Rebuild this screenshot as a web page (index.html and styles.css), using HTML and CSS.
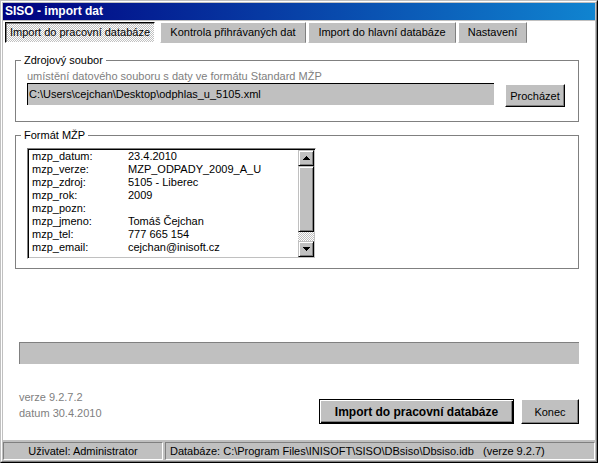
FILE: index.html
```html
<!DOCTYPE html>
<html lang="cs">
<head>
<meta charset="utf-8">
<title>SISO - import dat</title>
<link rel="stylesheet" href="styles.css">
</head>
<body>
<div class="window">
  <div class="frame">
    <div class="titlebar">SISO - import dat</div>
    <div class="body">
      <div class="tabs">
        <div class="tab tab-active t1">Import do pracovní databáze</div>
        <div class="tab t2">Kontrola přihrávaných dat</div>
        <div class="tab t3">Import do hlavní databáze</div>
        <div class="tab t4">Nastavení</div>
      </div>
      <div class="page">
        <fieldset class="group group-source">
          <legend>Zdrojový soubor</legend>
          <div class="hint">umístění datového souboru s daty ve formátu Standard MŽP</div>
          <div class="file-row">
            <div class="field">C:\Users\cejchan\Desktop\odphlas_u_5105.xml</div>
            <button class="btn btn-browse">Procházet</button>
          </div>
        </fieldset>
        <fieldset class="group group-format">
          <legend>Formát MŽP</legend>
          <div class="listbox">
            <div class="list-items">
              <div class="row"><span class="key">mzp_datum:</span><span>23.4.2010</span></div>
              <div class="row"><span class="key">mzp_verze:</span><span>MZP_ODPADY_2009_A_U</span></div>
              <div class="row"><span class="key">mzp_zdroj:</span><span>5105 - Liberec</span></div>
              <div class="row"><span class="key">mzp_rok:</span><span>2009</span></div>
              <div class="row"><span class="key">mzp_pozn:</span><span></span></div>
              <div class="row"><span class="key">mzp_jmeno:</span><span>Tomáš Čejchan</span></div>
              <div class="row"><span class="key">mzp_tel:</span><span>777 665 154</span></div>
              <div class="row"><span class="key">mzp_email:</span><span>cejchan@inisoft.cz</span></div>
            </div>
            <div class="scrollbar">
              <div class="sb-btn">
                <svg width="7" height="4" viewBox="0 0 7 4" shape-rendering="crispEdges"><rect x="3" y="0" width="1" height="1"/><rect x="2" y="1" width="3" height="1"/><rect x="1" y="2" width="5" height="1"/><rect x="0" y="3" width="7" height="1"/></svg>
              </div>
              <div class="sb-thumb"></div>
              <div class="sb-track"></div>
              <div class="sb-btn">
                <svg width="7" height="4" viewBox="0 0 7 4" shape-rendering="crispEdges"><rect x="0" y="0" width="7" height="1"/><rect x="1" y="1" width="5" height="1"/><rect x="2" y="2" width="3" height="1"/><rect x="3" y="3" width="1" height="1"/></svg>
              </div>
            </div>
          </div>
        </fieldset>
        <div class="progress"></div>
        <div class="footer">
          <div class="version">
            <div>verze 9.2.7.2</div>
            <div>datum 30.4.2010</div>
          </div>
          <div class="actions">
            <button class="btn btn-default">Import do pracovní databáze</button>
            <button class="btn btn-close">Konec</button>
          </div>
        </div>
      </div>
    </div>
    <div class="statusbar">
      <div class="panel panel-user">Uživatel: Administrator</div>
      <div class="panel panel-db">Databáze: C:\Program Files\INISOFT\SISO\DBsiso\Dbsiso.idb&nbsp;&nbsp; (verze 9.2.7)</div>
    </div>
  </div>
</div>
</body>
</html>
```
FILE: styles.css
```css
* { box-sizing: border-box; }

body {
  margin: 0;
  font-family: "Liberation Sans", Arial, sans-serif;
  font-size: 11px;
  color: #000;
  background: #fff;
}

.window {
  width: 598px;
  height: 463px;
  border: 1px solid;
  border-color: #c0c0c0 #000 #000 #c0c0c0;
}

.frame {
  height: 100%;
  border: 1px solid;
  border-color: #fff #808080 #808080 #fff;
  padding: 1px;
  background: #c0c0c0;
  display: flex;
  flex-direction: column;
}

.titlebar {
  flex: none;
  height: 17px;
  margin-bottom: 1px;
  padding-left: 2px;
  background: linear-gradient(to right, #000080, #1084d0);
  color: #fff;
  font-weight: bold;
  font-size: 12px;
  line-height: 17px;
  white-space: nowrap;
}

.body {
  flex: 1;
  background: #fff;
  display: flex;
  flex-direction: column;
}

.tabs {
  display: flex;
  height: 21px;
  margin-top: 1px;
  padding-left: 2px;
}

.tab {
  height: 21px;
  line-height: 19px;
  text-align: center;
  white-space: nowrap;
  background: #c0c0c0;
  border: 1px solid;
  border-color: #fff #808080 transparent #fff;
}

.tab-active {
  border-color: #000 #fff #fff #000;
  box-shadow: inset 1px 1px #808080;
  background-color: #fff;
  background-image: conic-gradient(#fff 0 25%, #c0c0c0 0 50%, #fff 0 75%, #c0c0c0 0);
  background-size: 2px 2px;
}

.t1 { width: 150px; margin-right: 5px; }
.t2 { width: 146px; margin-right: 2px; }
.t3 { width: 148px; margin-right: 2px; }
.t4 { width: 69px; }

.page {
  flex: 1;
  padding: 0 16px 0 12px;
  display: flex;
  flex-direction: column;
}

.group {
  margin: 0;
  border: 1px solid #808080;
  padding: 3px 11px 14px 11px;
  min-width: 0;
}

.group legend {
  margin-left: -6px;
  padding: 0 3px;
  line-height: 13px;
}

.group-source { margin-top: 11px; }

.hint {
  color: #808080;
  line-height: 13px;
  white-space: nowrap;
}

.file-row {
  display: flex;
  align-items: flex-start;
}

.field {
  width: 467px;
  height: 22px;
  margin-right: 11px;
  padding-left: 1px;
  line-height: 21px;
  background: #c0c0c0;
  border-top: 1px solid #000;
  border-left: 1px solid #000;
  white-space: nowrap;
}

.btn {
  font-family: inherit;
  font-size: 11px;
  color: #000;
  background: #c0c0c0;
  border: 1px solid;
  border-color: #fff #000 #000 #fff;
  box-shadow: inset -1px -1px #808080;
  padding: 0;
  margin: 0;
  white-space: nowrap;
}

.btn-browse {
  width: 60px;
  height: 23px;
  margin-top: 1px;
}

.group-format {
  margin-top: 7px;
  padding-top: 6px;
  padding-bottom: 9px;
}

.listbox {
  width: 289px;
  height: 111px;
  display: flex;
  border: 1px solid;
  border-color: #808080 #fff #fff #808080;
  box-shadow: inset 1px 1px #000, inset -1px -1px #c0c0c0;
  padding: 1px;
}

.list-items {
  flex: 1;
  padding: 0 0 0 3px;
}

.row {
  display: flex;
  line-height: 13px;
  white-space: nowrap;
}

.key { width: 96px; flex: none; }

.scrollbar {
  width: 16px;
  display: flex;
  flex-direction: column;
}

.sb-btn, .sb-thumb {
  background: #c0c0c0;
  border: 1px solid;
  border-color: #c0c0c0 #000 #000 #c0c0c0;
  box-shadow: inset 1px 1px #fff, inset -1px -1px #808080;
}

.sb-btn {
  height: 16px;
  flex: none;
  display: flex;
  align-items: center;
  justify-content: center;
}

.sb-btn svg { fill: #000; display: block; }

.sb-thumb { height: 66px; flex: none; }

.sb-track {
  flex: 1;
  background-color: #fff;
  background-image: conic-gradient(#fff 0 25%, #c0c0c0 0 50%, #fff 0 75%, #c0c0c0 0);
  background-size: 2px 2px;
}

.progress {
  margin: 73px 0 0 4px;
  height: 22px;
  background: #c0c0c0;
  border-top: 1px solid #808080;
  border-left: 1px solid #808080;
}

.footer {
  display: flex;
  justify-content: space-between;
  align-items: flex-start;
  margin-top: 25px;
}

.version {
  margin-left: 4px;
  color: #808080;
  line-height: 16px;
}

.actions {
  display: flex;
  gap: 7px;
  margin-top: 10px;
}

.btn-default {
  width: 195px;
  height: 25px;
  font-weight: bold;
  font-size: 12px;
  border: 1px solid #000;
  box-shadow: inset 1px 1px #fff, inset -1px -1px #000, inset -2px -2px #808080;
}

.btn-close {
  width: 58px;
  height: 25px;
}

.statusbar {
  flex: none;
  height: 20px;
  padding-top: 2px;
  display: flex;
  gap: 2px;
}

.panel {
  height: 18px;
  line-height: 16px;
  border: 1px solid;
  border-color: #808080 #fff #fff #808080;
  white-space: nowrap;
}

.panel-user {
  width: 160px;
  text-align: center;
}

.panel-db {
  flex: 1;
  padding-left: 4px;
}
```
